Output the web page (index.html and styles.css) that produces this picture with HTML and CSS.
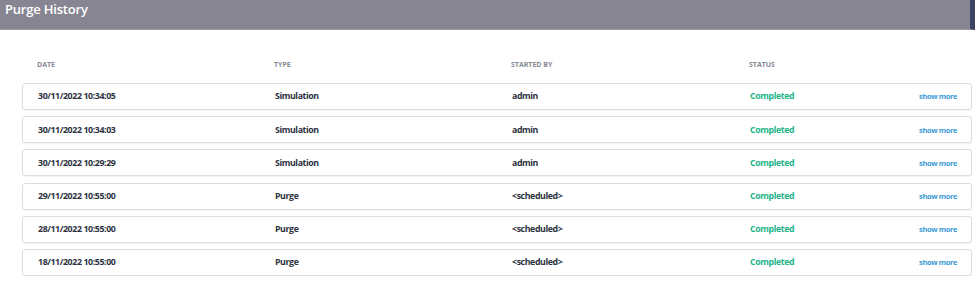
FILE: index.html
```html
<!DOCTYPE html>
<html lang="en">
<head>
  <meta charset="UTF-8" />
  <title>Purge History</title>
  <link rel="stylesheet" href="styles.css">
</head>
<body>

  <!-- Page header -->
  <div class="page-header">
    <h1>Purge History</h1>
  </div>

  <!-- History list -->
  <div class="history">
    <div class="history-head">
      <span>Date</span>
      <span>Type</span>
      <span>Started by</span>
      <span>Status</span>
    </div>

    <div class="history-row">
      <span>30/11/2022 10:34:05</span>
      <span>Simulation</span>
      <span>admin</span>
      <span class="status">Completed</span>
      <a href="#" class="more">show more</a>
    </div>
    <div class="history-row">
      <span>30/11/2022 10:34:03</span>
      <span>Simulation</span>
      <span>admin</span>
      <span class="status">Completed</span>
      <a href="#" class="more">show more</a>
    </div>
    <div class="history-row">
      <span>30/11/2022 10:29:29</span>
      <span>Simulation</span>
      <span>admin</span>
      <span class="status">Completed</span>
      <a href="#" class="more">show more</a>
    </div>
    <div class="history-row">
      <span>29/11/2022 10:55:00</span>
      <span>Purge</span>
      <span>&lt;scheduled&gt;</span>
      <span class="status">Completed</span>
      <a href="#" class="more">show more</a>
    </div>
    <div class="history-row">
      <span>28/11/2022 10:55:00</span>
      <span>Purge</span>
      <span>&lt;scheduled&gt;</span>
      <span class="status">Completed</span>
      <a href="#" class="more">show more</a>
    </div>
    <div class="history-row">
      <span>18/11/2022 10:55:00</span>
      <span>Purge</span>
      <span>&lt;scheduled&gt;</span>
      <span class="status">Completed</span>
      <a href="#" class="more">show more</a>
    </div>
  </div>

</body>
</html>
```

FILE: styles.css
```css
* {
  box-sizing: border-box;
  margin: 0;
  padding: 0;
}

body {
  font-family: "Open Sans", sans-serif;
  background: #fff;
  color: #2c3240;
}

.page-header {
  height: 30px;
  background: #878592;
  border-right: 5px solid #3c4462;
  border-bottom: 1px solid #9d9ba6;
  padding-left: 5px;
}

.page-header h1 {
  font-size: 13px;
  font-weight: 600;
  letter-spacing: -0.2px;
  line-height: 18px;
  color: #fff;
}

.history {
  padding: 24px 3px 0 22px;
  display: flex;
  flex-direction: column;
  gap: 6.2px;
}

.history-head,
.history-row {
  display: grid;
  grid-template-columns: 237px 237px 238px 1fr auto;
  align-items: center;
  padding: 0 14px 0 15px;
}

.history-head {
  height: 20px;
  margin-bottom: 2.8px;
  font-size: 7px;
  font-weight: 700;
  text-transform: uppercase;
  color: #858a94;
}

.history-row {
  height: 27px;
  border: 1px solid #dcdde0;
  border-radius: 3px;
  box-shadow: 0 1px 1px rgba(0, 0, 0, 0.05);
  font-size: 8.8px;
  font-weight: 700;
  letter-spacing: -0.4px;
}

.status {
  color: #25b38b;
}

.more {
  font-size: 7.5px;
  color: #3d9ad6;
  text-decoration: none;
}
```
